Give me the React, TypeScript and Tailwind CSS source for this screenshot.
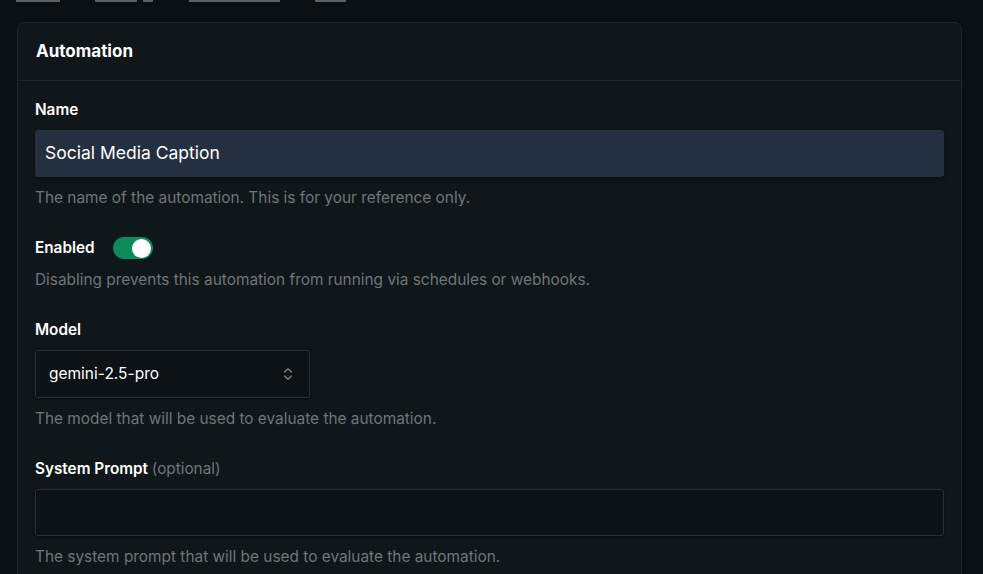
const Chevrons = () => (
  <svg width="16" height="16" viewBox="0 0 24 24" fill="none" stroke="currentColor" strokeWidth="2" strokeLinecap="round" strokeLinejoin="round">
    <path d="m7 15 5 5 5-5" />
    <path d="m7 9 5-5 5 5" />
  </svg>
);

const Help = ({ children }: { children: React.ReactNode }) => (
  <p className="mt-[11px] text-[15.4px] leading-5 text-[#6e7679]">{children}</p>
);

const App = () => (
  <main
    className="h-[574px] w-full overflow-hidden bg-[#0a1014] pr-[21px] pl-[17px]"
    style={{ fontFamily: 'Inter, "Noto Sans", sans-serif' }}
  >
    {/* cut-off toolbar row at the top */}
    <div className="flex h-[2px] items-start">
      <div className="ml-[-1px] h-[2px] w-[44px] bg-[#5b6063]" />
      <div className="ml-[35px] h-[2px] w-[42px] bg-[#5b6063]" />
      <div className="ml-[6px] h-[2px] w-[10px] bg-[#5b6063]" />
      <div className="ml-[36px] h-[2px] w-[91px] bg-[#5b6063]" />
      <div className="ml-[35px] h-[2px] w-[31px] bg-[#5b6063]" />
    </div>

    <section className="mt-[20px] rounded-lg border border-[#1f2629] bg-[#10171a]">
      <header className="flex h-[58px] items-center border-b border-[#1f2629] px-[18px]">
        <h2 className="text-[17px] font-bold text-white">Automation</h2>
      </header>

      <div className="px-[17px] pt-[19px]">
        <label className="block text-[15.3px] leading-5 font-semibold text-white">Name</label>
        <div className="mt-[10px] flex h-[47px] items-center rounded-[3px] bg-[#243040] px-[10px] text-[17.5px] text-white shadow-[0_2px_4px_rgba(0,0,0,0.45)]">
          Social Media Caption
        </div>
        <Help>The name of the automation. This is for your reference only.</Help>

        <div className="mt-[29px] flex h-[22px] items-center gap-[18px]">
          <span className="text-[15.3px] leading-5 font-semibold text-white">Enabled</span>
          <span className="flex h-[22px] w-[40px] items-center justify-end rounded-full bg-[#0f8a5c] px-[2px]">
            <span className="h-[19px] w-[19px] rounded-full bg-white" />
          </span>
        </div>
        <Help>Disabling prevents this automation from running via schedules or webhooks.</Help>

        <label className="mt-[30px] block text-[15.3px] leading-5 font-semibold text-white">Model</label>
        <div className="mt-[10px] flex h-[48px] w-[275px] items-center justify-between rounded-[3px] border border-[#2a3135] bg-[#0c1216] pr-[13px] pl-[13px] text-[15.5px] text-white shadow-[0_1px_3px_rgba(0,0,0,0.4)]">
          <span>gemini-2.5-pro</span>
          <span className="text-[#7c8588]">
            <Chevrons />
          </span>
        </div>
        <Help>The model that will be used to evaluate the automation.</Help>

        <label className="mt-[30px] block text-[15.3px] leading-5 font-semibold text-white">
          System Prompt <span className="font-normal text-[#6e7679]">(optional)</span>
        </label>
        <div className="mt-[10px] h-[47px] rounded-[3px] border border-[#2a3135] bg-[#0c1216] shadow-[0_1px_3px_rgba(0,0,0,0.4)]" />
        <Help>The system prompt that will be used to evaluate the automation.</Help>
        <div className="h-10" />
      </div>
    </section>
  </main>
);

export default App;
